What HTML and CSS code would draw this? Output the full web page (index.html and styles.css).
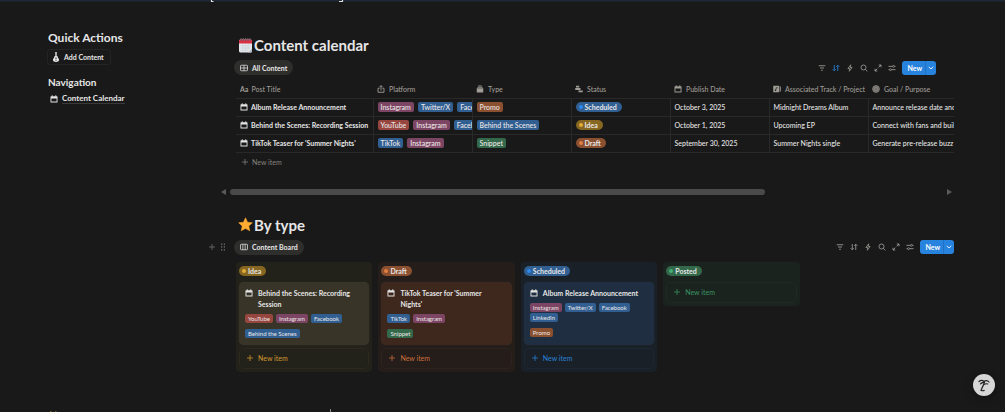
FILE: index.html
```html
<!DOCTYPE html>
<html lang="en">
<head>
  <meta charset="UTF-8">
  <meta name="viewport" content="width=device-width, initial-scale=1.0">
  <title>Content Calendar</title>
  <link rel="stylesheet" href="styles.css">
</head>
<body>
  <!-- icon sprite -->
  <svg class="sprite" aria-hidden="true">
    <symbol id="i-cal" viewBox="0 0 16 16"><path d="M2 2.500h12a1 1 0 0 1 1 1V14a1 1 0 0 1-1 1H2a1 1 0 0 1-1-1V3.500a1 1 0 0 1 1-1zM2.800 7v6.200h10.400V7z" fill="currentColor" fill-rule="evenodd"/><path d="M4.500 .5v3M11.500 .5v3" stroke="currentColor" stroke-width="1.800"/></symbol>
    <symbol id="i-table" viewBox="0 0 16 16"><path d="M2.500 2.500h11a1.500 1.500 0 0 1 1.500 1.500v8a1.500 1.500 0 0 1-1.500 1.500h-11A1.500 1.500 0 0 1 1 12V4a1.500 1.500 0 0 1 1.500-1.500zM1 8h14M8 2.500v11" fill="none" stroke="currentColor" stroke-width="1.500"/></symbol>
    <symbol id="i-board" viewBox="0 0 16 16"><path d="M2.500 2.500h11a1.500 1.500 0 0 1 1.500 1.500v8a1.500 1.500 0 0 1-1.500 1.500h-11A1.500 1.500 0 0 1 1 12V4a1.500 1.500 0 0 1 1.500-1.500zM5.700 2.500v11M10.300 2.500v11" fill="none" stroke="currentColor" stroke-width="1.500"/></symbol>
    <symbol id="i-share" viewBox="0 0 16 16"><path d="M5 6.500H2v8h12v-8h-3M8 11V1.500M5 4.200l3-3 3 3" fill="none" stroke="currentColor" stroke-width="1.800"/></symbol>
    <symbol id="i-stack" viewBox="0 0 16 16"><path d="M4.500 1h7v1.600h-7zM3 3.600h10v2H3zM1.500 6.600h13V14a1 1 0 0 1-1 1h-11a1 1 0 0 1-1-1z" fill="currentColor"/></symbol>
    <symbol id="i-status" viewBox="0 0 16 16"><path d="M2 1.500h6.500v3.700H2zM.5 6.200H11v3.700H.5zM7 11h8.500v3.700H7z" fill="currentColor"/></symbol>
    <symbol id="i-track" viewBox="0 0 16 16"><path d="M.5 1.500h12v13H.5zM8.500 4.500 5.500 5.300v3.600a1.500 1.500 0 1 0 1 1.400V6.800l3-.8z" fill="currentColor" fill-rule="evenodd"/><path d="M14.700 3v10" stroke="currentColor" stroke-width="1.800"/></symbol>
    <symbol id="i-target" viewBox="0 0 16 16"><circle cx="8" cy="8" r="6.800" fill="currentColor" fill-opacity=".55" stroke="currentColor" stroke-width="1.300"/><circle cx="8" cy="8" r="3.600" fill="none" stroke="currentColor" stroke-width="1.300"/><circle cx="8" cy="8" r="1.200" fill="currentColor"/></symbol>
    <symbol id="i-plus" viewBox="0 0 16 16"><path d="M8 2v12M2 8h12" stroke="currentColor" stroke-width="1.500"/></symbol>
    <symbol id="i-filter" viewBox="0 0 16 16"><path d="M1.500 3.500h13M4 8h8M6.300 12.500h3.400" stroke="currentColor" stroke-width="1.700"/></symbol>
    <symbol id="i-sort" viewBox="0 0 16 16"><path d="M4.500 2v11.500M1.500 10.500l3 3 3-3M11.500 14V2.500M8.500 5.500l3-3 3 3" fill="none" stroke="currentColor" stroke-width="1.700"/></symbol>
    <symbol id="i-bolt" viewBox="0 0 16 16"><path d="M9.500 1.500 3.800 9h3.700l-1 5.500L12.200 7H8.500z" fill="none" stroke="currentColor" stroke-width="1.500" stroke-linejoin="round"/></symbol>
    <symbol id="i-search" viewBox="0 0 16 16"><circle cx="7" cy="7" r="5" fill="none" stroke="currentColor" stroke-width="1.600"/><path d="m10.700 10.700 4 4" stroke="currentColor" stroke-width="1.700"/></symbol>
    <symbol id="i-expand" viewBox="0 0 16 16"><path d="M9.500 2H14v4.500M14 2 9.300 6.700M6.500 14H2V9.500M2 14l4.700-4.700" fill="none" stroke="currentColor" stroke-width="1.700"/></symbol>
    <symbol id="i-settings" viewBox="0 0 16 16"><path d="M1 4.700h8M13 4.700h2M1 11.300h2M7 11.300h8" stroke="currentColor" stroke-width="1.700"/><circle cx="11" cy="4.700" r="1.900" fill="none" stroke="currentColor" stroke-width="1.400"/><circle cx="5" cy="11.300" r="1.900" fill="none" stroke="currentColor" stroke-width="1.400"/></symbol>
    <symbol id="i-down" viewBox="0 0 16 16"><path d="m2 5 6 5.500L14 5" fill="none" stroke="currentColor" stroke-width="2.200"/></symbol>
    <symbol id="i-drag" viewBox="0 0 16 16"><path d="M4 1h2.500v2.500H4zM9.500 1H12v2.500H9.500zM4 6.700h2.500v2.500H4zM9.500 6.700H12v2.500H9.500zM4 12.500h2.500V15H4zM9.500 12.500H12V15H9.500z" fill="currentColor"/></symbol>
    <symbol id="i-guitar" viewBox="0 0 16 20"><path d="M6.500 0h3l-.2 8c2.400.4 3 2 2.400 3.600 1.600 1 2.400 2.400 2.400 4 0 2.900-2.500 4.400-6.100 4.400s-6.100-1.500-6.100-4.400c0-1.600.8-3 2.400-4-.6-1.600 0-3.200 2.400-3.600z" fill="currentColor"/><circle cx="8" cy="12.500" r="1.300" fill="#191919"/><path d="M6 16.500h4" stroke="#191919"/></symbol>
  </svg>

  <header class="topbar">
    <svg viewBox="0 0 140 3" aria-hidden="true"><path d="M3.500 0v1.500h2M131 1.500h3.500V0" fill="none" stroke="#dcdcdc" stroke-width="1.200"/></svg>
  </header>

  <div class="page">
    <aside class="sidebar">
      <h2 class="side-title">Quick Actions</h2>
      <button class="add-btn"><svg class="guitar"><use href="#i-guitar"/></svg>Add Content</button>
      <h3 class="side-subtitle">Navigation</h3>
      <a class="nav-link" href="#calendar"><svg class="icon"><use href="#i-cal"/></svg><span>Content Calendar</span></a>
    </aside>

    <main class="main">
      <section id="calendar">
        <h1 class="section-title">
          <svg class="emoji" viewBox="0 0 28 30" aria-hidden="true">
            <rect x="1" y="3" width="26" height="26" rx="3" fill="#e4e7ec"/>
            <path d="M1 11V6a3 3 0 0 1 3-3h20a3 3 0 0 1 3 3v5z" fill="#d92f45"/>
            <path d="M5 0v6M9.500 0v6M14 0v6M18.500 0v6M23 0v6" stroke="#6d6165" stroke-width="2"/>
            <path d="M4 15.500h20M4 20h20M4 24.500h14M9 13v14M14 13v14M19 13v14" stroke="#c3c9d3" stroke-width="1"/>
            <path d="M27 21v5a3 3 0 0 1-3 3h-5z" fill="#b7bdc8"/>
          </svg>Content calendar
        </h1>
        <div class="view-bar table-bar">
          <button class="view-tab"><svg class="icon"><use href="#i-table"/></svg>All Content</button>
          <div class="tools">
            <button class="tool" aria-label="Filter"><svg><use href="#i-filter"/></svg></button>
            <button class="tool active" aria-label="Sort"><svg><use href="#i-sort"/></svg></button>
            <button class="tool" aria-label="Automations"><svg><use href="#i-bolt"/></svg></button>
            <button class="tool" aria-label="Search"><svg><use href="#i-search"/></svg></button>
            <button class="tool" aria-label="Expand"><svg><use href="#i-expand"/></svg></button>
            <button class="tool" aria-label="Settings"><svg><use href="#i-settings"/></svg></button>
            <div class="new-group">
              <button class="new-btn">New</button>
              <button class="new-more" aria-label="More"><svg><use href="#i-down"/></svg></button>
            </div>
          </div>
        </div>

        <div class="table-wrap">
          <table class="content-table">
            <thead>
              <tr>
                <th class="col-title"><span class="aa">Aa</span>Post Title</th>
                <th><svg class="icon"><use href="#i-share"/></svg>Platform</th>
                <th><svg class="icon"><use href="#i-stack"/></svg>Type</th>
                <th><svg class="icon"><use href="#i-status"/></svg>Status</th>
                <th><svg class="icon"><use href="#i-cal"/></svg>Publish Date</th>
                <th><svg class="icon"><use href="#i-track"/></svg>Associated Track / Project</th>
                <th class="col-goal"><svg class="icon"><use href="#i-target"/></svg>Goal / Purpose</th>
              </tr>
            </thead>
            <tbody>
              <tr>
                <td class="post"><svg class="icon"><use href="#i-cal"/></svg>Album Release Announcement</td>
                <td><span class="tag pink">Instagram</span><span class="tag blue">Twitter/X</span><span class="tag blue">Facebook</span></td>
                <td><span class="tag orange">Promo</span></td>
                <td><span class="status blue">Scheduled</span></td>
                <td>October 3, 2025</td>
                <td>Midnight Dreams Album</td>
                <td>Announce release date and build hype</td>
              </tr>
              <tr>
                <td class="post"><svg class="icon"><use href="#i-cal"/></svg>Behind the Scenes: Recording Session</td>
                <td><span class="tag red">YouTube</span><span class="tag pink">Instagram</span><span class="tag blue">Facebook</span></td>
                <td><span class="tag blue">Behind the Scenes</span></td>
                <td><span class="status yellow">Idea</span></td>
                <td>October 1, 2025</td>
                <td>Upcoming EP</td>
                <td>Connect with fans and build community</td>
              </tr>
              <tr>
                <td class="post"><svg class="icon"><use href="#i-cal"/></svg>TikTok Teaser for 'Summer Nights'</td>
                <td><span class="tag blue">TikTok</span><span class="tag pink">Instagram</span></td>
                <td><span class="tag green">Snippet</span></td>
                <td><span class="status orange">Draft</span></td>
                <td>September 30, 2025</td>
                <td>Summer Nights single</td>
                <td>Generate pre-release buzz and interest</td>
              </tr>
            </tbody>
          </table>
        </div>
        <button class="row-new"><svg class="icon"><use href="#i-plus"/></svg>New item</button>

        <div class="scrollbar" aria-hidden="true">
          <span class="arrow left"></span>
          <div class="track"><div class="thumb"></div></div>
          <span class="arrow right"></span>
        </div>
      </section>

      <section>
        <h1 class="section-title">
          <svg class="emoji" viewBox="0 0 28 28" aria-hidden="true"><path d="m14 1.500 3.800 8.300 9 1-6.700 6.100 1.900 8.900-8-4.500-8 4.500 1.900-8.900-6.700-6.100 9-1z" fill="#ffac33" stroke="#ffac33" stroke-linejoin="round"/></svg>By type
        </h1>
        <div class="view-bar board-bar">
          <div class="handles">
            <svg class="icon"><use href="#i-plus"/></svg>
            <svg class="icon"><use href="#i-drag"/></svg>
          </div>
          <button class="view-tab"><svg class="icon"><use href="#i-board"/></svg>Content Board</button>
          <div class="tools">
            <button class="tool" aria-label="Filter"><svg><use href="#i-filter"/></svg></button>
            <button class="tool" aria-label="Sort"><svg><use href="#i-sort"/></svg></button>
            <button class="tool" aria-label="Automations"><svg><use href="#i-bolt"/></svg></button>
            <button class="tool" aria-label="Search"><svg><use href="#i-search"/></svg></button>
            <button class="tool" aria-label="Expand"><svg><use href="#i-expand"/></svg></button>
            <button class="tool" aria-label="Settings"><svg><use href="#i-settings"/></svg></button>
            <div class="new-group">
              <button class="new-btn">New</button>
              <button class="new-more" aria-label="More"><svg><use href="#i-down"/></svg></button>
            </div>
          </div>
        </div>

        <div class="board">
          <div class="column col-idea">
            <span class="status yellow">Idea</span>
            <article class="card">
              <h4 class="card-title"><svg class="icon"><use href="#i-cal"/></svg><span>Behind the Scenes: Recording Session</span></h4>
              <div class="tags"><span class="tag red">YouTube</span><span class="tag pink">Instagram</span><span class="tag blue">Facebook</span></div>
              <div class="tags"><span class="tag blue">Behind the Scenes</span></div>
            </article>
            <button class="card-new"><svg class="icon"><use href="#i-plus"/></svg>New item</button>
          </div>

          <div class="column col-draft">
            <span class="status orange">Draft</span>
            <article class="card">
              <h4 class="card-title"><svg class="icon"><use href="#i-cal"/></svg><span>TikTok Teaser for 'Summer Nights'</span></h4>
              <div class="tags"><span class="tag blue">TikTok</span><span class="tag pink">Instagram</span></div>
              <div class="tags"><span class="tag green">Snippet</span></div>
            </article>
            <button class="card-new"><svg class="icon"><use href="#i-plus"/></svg>New item</button>
          </div>

          <div class="column col-scheduled">
            <span class="status blue">Scheduled</span>
            <article class="card">
              <h4 class="card-title"><svg class="icon"><use href="#i-cal"/></svg><span>Album Release Announcement</span></h4>
              <div class="tags"><span class="tag pink">Instagram</span><span class="tag blue">Twitter/X</span><span class="tag blue">Facebook</span><span class="tag blue">LinkedIn</span></div>
              <div class="tags"><span class="tag orange">Promo</span></div>
            </article>
            <button class="card-new"><svg class="icon"><use href="#i-plus"/></svg>New item</button>
          </div>

          <div class="column col-posted">
            <span class="status green">Posted</span>
            <button class="card-new"><svg class="icon"><use href="#i-plus"/></svg>New item</button>
          </div>
        </div>
      </section>
    </main>
  </div>

  <footer class="page-end">
    <svg width="290" height="3" viewBox="0 0 290 3" aria-hidden="true"><path d="M2 2.500h1.500M7 2.500h1.500" stroke="#6b5c25"/><path d="M282.500 0v3" stroke="#8a8a8a"/></svg>
  </footer>

  <button class="ai-btn" aria-label="Assistant">
    <svg viewBox="0 0 22 22"><path d="M6 7.500c1.500-1.300 3.500-1.200 5-.3 2-1 4-.6 5 .8M7.500 9.800c1.200-1.200 2.700-1.400 4.200-2.300-1 3.200-2.200 5.700-3.700 8.700 1 .7 2 .7 3.200.2M11 10.500c1.300-.8 2.400-1 3.700-.5" fill="none" stroke="#222" stroke-width="1.200" stroke-linecap="round"/></svg>
  </button>
</body>
</html>
```
FILE: styles.css
```css
* {
  box-sizing: border-box;
}

body {
  margin: 0;
  min-height: 100vh;
  display: flex;
  flex-direction: column;
  background: #191919;
  color: #e6e6e6;
  font-family: Lato, "Open Sans", sans-serif;
  font-size: 7px;
  line-height: 10px;
}

h1, h2, h3, h4 {
  margin: 0;
  font-weight: 700;
}

button {
  display: flex;
  align-items: center;
  margin: 0;
  padding: 0;
  border: 0;
  background: none;
  color: inherit;
  font: inherit;
  cursor: pointer;
}

svg {
  display: block;
  flex: none;
}

.sprite {
  position: absolute;
  width: 0;
  height: 0;
}

.icon {
  width: 8px;
  height: 8px;
}

.topbar {
  height: 3px;
  padding-left: 208px;
  background: linear-gradient(#1d2a36 1px, #191919 2px);
}

.topbar svg {
  width: 140px;
  height: 3px;
}

.page {
  display: flex;
  padding: 27px 51px 0 48px;
}

/* sidebar */
.sidebar {
  flex: none;
  width: 188px;
}

.side-title {
  font-size: 12px;
  line-height: 16px;
}

.add-btn {
  height: 16px;
  margin: 3px 0 0 -1px;
  padding: 0 6px 0 4px;
  gap: 4px;
  border: 1px solid #242424;
  border-radius: 3px;
  font-weight: 700;
}

.guitar {
  width: 8px;
  height: 10px;
}

.side-subtitle {
  margin-top: 10px;
  font-size: 10px;
  line-height: 14px;
}

.nav-link {
  display: flex;
  align-items: center;
  gap: 4px;
  margin: 4px 0 0 2px;
  color: inherit;
  font-size: 8px;
  font-weight: 700;
  text-decoration: none;
}

.nav-link span {
  border-bottom: 1px solid #3a3a3a;
}

/* sections */
.main {
  flex: 1;
  min-width: 0;
  padding-top: 5px;
}

.section-title {
  display: flex;
  align-items: center;
  gap: 1px;
  padding-left: 2px;
  font-size: 15px;
  line-height: 20px;
}

.emoji {
  width: 15px;
  height: 15px;
}

.view-bar {
  display: flex;
  align-items: center;
  margin: 5px 0 0 -2px;
}

.view-tab {
  height: 15px;
  padding: 0 6px;
  gap: 4px;
  border-radius: 8px;
  background: #2e2e2d;
  font-weight: 700;
}

.table-bar {
  margin-right: 18px;
}

.tools {
  display: flex;
  align-items: center;
  gap: 6px;
  margin-left: auto;
  color: #a3a19c;
}

.tool svg {
  width: 8px;
  height: 8px;
}

.tool.active {
  color: #2b84dc;
}

.new-group {
  display: flex;
  height: 14px;
  border-radius: 3px;
  background: #2783de;
  color: #fff;
}

.new-btn {
  padding: 0 3px 0 5px;
  font-weight: 700;
}

.new-more {
  padding: 0 2px;
  border-left: 1px solid #2272c2;
}

.new-more svg {
  width: 6px;
  height: 6px;
}

/* table */
.table-wrap {
  margin-top: 5px;
  overflow: hidden;
}

.content-table {
  width: 788px;
  table-layout: fixed;
  border-collapse: collapse;
}

.content-table th,
.content-table td {
  height: 18px;
  padding: 0 0 0 4px;
  border-bottom: 1px solid #292929;
  overflow: hidden;
  font-weight: 500;
  text-align: left;
  white-space: nowrap;
}

.content-table th {
  color: #a09d97;
}

.content-table td + td {
  border-left: 1px solid #292929;
}

.content-table .col-title {
  width: 137px;
}

.content-table .col-goal {
  width: 156px;
}

.content-table .icon {
  display: inline-block;
  margin-right: 4px;
  vertical-align: -1px;
}

.content-table .aa {
  margin-right: 3px;
  font-weight: 700;
}

.content-table .post {
  font-weight: 700;
}

.content-table .post .icon {
  margin-right: 3px;
}

.row-new {
  height: 18px;
  padding-left: 5px;
  gap: 3px;
  color: #85837e;
}

/* tags */
.tag {
  display: inline-block;
  padding: 0 3px;
  border-radius: 2px;
  color: #ece7e7;
  white-space: nowrap;
}

td .tag {
  margin-right: 4px;
}

.status {
  display: inline-flex;
  align-items: center;
  gap: 2px;
  padding: 0 5px 0 3px;
  border-radius: 5px;
  font-weight: 700;
  vertical-align: top;
}

.status::before {
  content: "";
  width: 4px;
  height: 4px;
  border-radius: 50%;
  background: #2b8af0;
}

.pink { background: #7d4564; }
.blue { background: #315f92; }
.red { background: #96453f; }
.orange { background: #8a5030; }
.green { background: #33684a; }
.yellow { background: #866721; }

.status.yellow::before { background: #e5ab36; }
.status.orange::before { background: #e08042; }
.status.green::before { background: #43ad76; }

/* horizontal scrollbar */
.scrollbar {
  display: flex;
  align-items: center;
  gap: 4px;
  margin: 18px 2px 0 -15px;
}

.track {
  flex: 1;
}

.thumb {
  width: 75%;
  height: 6px;
  border-radius: 3px;
  background: #4a4a4a;
}

.arrow {
  border: 3px solid transparent;
}

.arrow.left {
  border-left: 0;
  border-right: 5px solid #5a5a5a;
}

.arrow.right {
  border-right: 0;
  border-left: 5px solid #5a5a5a;
}

/* board */
.main section + section {
  margin-top: 20px;
}

.board-bar {
  margin-left: -28px;
}

.handles {
  display: flex;
  gap: 3px;
  margin-right: 7px;
  color: #777;
}

.board {
  display: flex;
  align-items: flex-start;
  gap: 6px;
  margin-top: 7px;
}

.column {
  width: 19%;
  padding: 4px 3px 3px;
  border-radius: 4px;
}

.card {
  min-height: 63px;
  margin-top: 6px;
  padding: 6px 6px 5px;
  border-radius: 5px;
  box-shadow: 0 0 1px rgba(255, 255, 255, 0.15);
}

.card-title {
  display: flex;
  gap: 5px;
  margin-bottom: 4px;
  padding-right: 6px;
  font-size: 7px;
  line-height: 11px;
}

.card-title .icon {
  margin-top: 1px;
}

.tags {
  display: flex;
  flex-wrap: wrap;
  gap: 1px 3px;
}

.tags + .tags {
  margin-top: 6px;
}

.tags .tag {
  font-size: 6px;
  line-height: 9px;
}

.card-new {
  width: 100%;
  height: 21px;
  margin-top: 3px;
  padding-left: 6px;
  gap: 4px;
  border: 1px solid;
  border-radius: 5px;
}

.status + .card-new {
  margin-top: 6px;
}

.col-idea { background: #22211a; }
.col-idea .card { background: #383528; }
.col-idea .card-new { border-color: #2b291c; color: #d3992f; }

.col-draft { background: #241d1a; }
.col-draft .card { background: #3e281d; }
.col-draft .card-new { border-color: #2d221c; color: #c96f3b; }

.col-scheduled { background: #192028; }
.col-scheduled .card { background: #1f2e40; }
.col-scheduled .card-new { border-color: #1c2733; color: #2b80d8; }

.col-posted { background: #1b231e; }
.col-posted .card-new { border-color: #1e2b23; color: #3a9465; }

.page-end {
  margin-top: auto;
  padding-left: 48px;
}

.ai-btn {
  position: fixed;
  right: 10px;
  bottom: 16px;
  width: 22px;
  height: 22px;
  border-radius: 50%;
  background: #d6d6d6;
  box-shadow: 0 2px 8px rgba(0, 0, 0, 0.4);
}

.ai-btn svg {
  width: 22px;
  height: 22px;
}
```
